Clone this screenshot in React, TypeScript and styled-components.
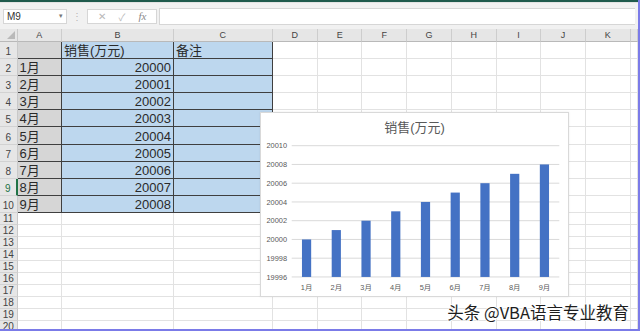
import styled, { createGlobalStyle } from "styled-components"

const GlobalStyle = createGlobalStyle`
    html, body {
        margin: 0;
        padding: 0;
        background: #ffffff;
    }
`

const COLS = ["", "A", "B", "C", "D", "E", "F", "G", "H", "I", "J", "K", ""]
const COL_WIDTHS = "17.5px 44.5px 112px 98.5px 45.3px 44.7px 44.7px 44.7px 44.7px 44.7px 44.7px 44.7px 1fr"
const MONTHS = ["1月", "2月", "3月", "4月", "5月", "6月", "7月", "8月", "9月"]
const SALES = [20000, 20001, 20002, 20003, 20004, 20005, 20006, 20007, 20008]
const ACTIVE_ROW = 9

type CellFill = "none" | "gray" | "blue"

function cellData(row: number, col: number): { text: string; fill: CellFill; boxed: boolean; right: boolean } {
    if (row > 10 || col > 3) return { text: "", fill: "none", boxed: false, right: false }
    if (col === 1) return { text: row === 1 ? "" : MONTHS[row - 2], fill: "gray", boxed: true, right: false }
    if (col === 2) {
        if (row === 1) return { text: "销售(万元)", fill: "blue", boxed: true, right: false }
        return { text: String(SALES[row - 2]), fill: "blue", boxed: true, right: true }
    }
    return { text: row === 1 ? "备注" : "", fill: "blue", boxed: true, right: false }
}

export default function App() {
    const rows = Array.from({ length: 20 }, (_, i) => i + 1)

    return (
        <Page>
            <GlobalStyle />
            <TopLine />
            <FormulaBar>
                <NameBox>
                    <span>M9</span>
                    <Caret>▾</Caret>
                </NameBox>
                <Grip>⋮</Grip>
                <FxBox>
                    <FxIcon>✕</FxIcon>
                    <FxIcon>✓</FxIcon>
                    <FxLabel>fx</FxLabel>
                </FxBox>
                <FormulaInput />
            </FormulaBar>
            <Sheet>
                {COLS.map((c, i) =>
                    i === 0 ? (
                        <Corner key="corner">
                            <CornerTriangle />
                        </Corner>
                    ) : (
                        <ColHeader key={"h" + i}>{c}</ColHeader>
                    )
                )}
                {rows.map((r) => (
                    <Row key={r}>
                        <RowHeader $active={r === ACTIVE_ROW} $small={r > 10}>
                            {r}
                        </RowHeader>
                        {COLS.slice(1).map((_, ci) => {
                            const d = cellData(r, ci + 1)
                            return (
                                <Cell key={ci} $fill={d.fill} $boxed={d.boxed} $right={d.right}>
                                    {d.text}
                                </Cell>
                            )
                        })}
                    </Row>
                ))}
            </Sheet>
            <SalesChart />
            <Watermark>头条 @VBA语言专业教育</Watermark>
        </Page>
    )
}

function SalesChart() {
    const left = 30.7
    const right = 298.3
    const top = 5.7
    const step = 18.75
    const ticks = [20010, 20008, 20006, 20004, 20002, 20000, 19998, 19996]
    const baseY = top + step * 7
    const band = (right - left) / SALES.length
    const valueY = (v: number) => baseY - ((v - 19996) / 2) * step

    return (
        <Chart>
            <ChartTitle>销售(万元)</ChartTitle>
            <svg width="307" height="156" viewBox="0 0 307 156">
                {ticks.map((t, i) => (
                    <g key={t}>
                        <line x1={left} x2={right} y1={top + i * step} y2={top + i * step} stroke="#d9d9d9" strokeWidth="1" />
                        <text x="26" y={top + i * step + 2.6} textAnchor="end" fontSize="7.4" fill="#595959" fontFamily="'Liberation Sans', sans-serif">
                            {t}
                        </text>
                    </g>
                ))}
                {SALES.map((v, i) => {
                    const cx = left + (i + 0.5) * band
                    const y = valueY(v)
                    return (
                        <g key={i}>
                            <rect x={cx - 4.6} y={y} width="9.2" height={baseY - y} fill="#4472c4" />
                            <text x={cx} y="149.5" textAnchor="middle" fontSize="7.4" fill="#595959" fontFamily="'Liberation Sans', 'Noto Sans CJK SC', sans-serif">
                                {MONTHS[i]}
                            </text>
                        </g>
                    )
                })}
            </svg>
        </Chart>
    )
}

const Page = styled.div`
    position: relative;
    width: 640px;
    height: 331px;
    overflow: hidden;
    box-sizing: border-box;
    border-right: 2px solid #7b7be8;
    border-bottom: 2px solid #7b7be8;
    font-family: "Liberation Sans", "Noto Sans CJK SC", sans-serif;
    background: #ffffff;
`

const TopLine = styled.div`
    height: 2px;
    background: #1f5a4c;
`

const FormulaBar = styled.div`
    display: flex;
    align-items: center;
    height: 27px;
    padding: 0 0 0 3px;
    box-sizing: border-box;
    background: #f1f1f1;
    border-top: 1px solid #e2e2e2;
`

const NameBox = styled.div`
    display: flex;
    align-items: center;
    justify-content: space-between;
    width: 64px;
    height: 15px;
    box-sizing: border-box;
    padding: 0 3px 0 3px;
    background: #ffffff;
    border: 1px solid #d6d6d6;
    font-size: 10px;
    color: #333333;
`

const Caret = styled.span`
    font-size: 7px;
    color: #777777;
`

const Grip = styled.span`
    width: 20px;
    text-align: center;
    font-size: 10px;
    color: #b5b5b5;
`

const FxBox = styled.div`
    display: flex;
    align-items: center;
    justify-content: space-around;
    width: 70px;
    height: 15px;
    box-sizing: border-box;
    margin-left: 0;
    padding: 0 3px;
    background: #ffffff;
    border: 1px solid #d6d6d6;
`

const FxIcon = styled.span`
    font-size: 10px;
    color: #b8b8b8;
`

const FxLabel = styled.span`
    font-family: "Liberation Serif", serif;
    font-style: italic;
    font-size: 11px;
    color: #8a8a8a;
`

const FormulaInput = styled.div`
    flex: 1;
    height: 15px;
    margin-left: 2px;
    margin-right: 3px;
    background: #ffffff;
    border: 1px solid #d6d6d6;
    border-right: none;
`

const Sheet = styled.div`
    display: grid;
    grid-template-columns: ${COL_WIDTHS};
    grid-template-rows: 13px repeat(10, 17.1px) repeat(10, 12px);
`

const Row = styled.div`
    display: contents;
`

const Corner = styled.div`
    position: relative;
    background: #e6e6e6;
    border-right: 1px solid #c9c9c9;
    border-bottom: 1px solid #b9b9b9;
`

const CornerTriangle = styled.div`
    position: absolute;
    right: 2px;
    bottom: 2px;
    width: 0;
    height: 0;
    border-left: 8px solid transparent;
    border-bottom: 8px solid #b9b9b9;
`

const ColHeader = styled.div`
    display: flex;
    align-items: center;
    justify-content: center;
    background: #e6e6e6;
    border-right: 1px solid #cdcdcd;
    border-bottom: 1px solid #b9b9b9;
    font-size: 9px;
    color: #444444;
`

const RowHeader = styled.div<{ $active: boolean; $small: boolean }>`
    display: flex;
    align-items: flex-end;
    justify-content: center;
    padding-bottom: ${({ $small }) => ($small ? "0" : "1px")};
    box-sizing: border-box;
    background: #e6e6e6;
    border-bottom: 1px solid #d2d2d2;
    border-right: ${({ $active }) => ($active ? "2px solid #217346" : "1px solid #c9c9c9")};
    font-size: 10px;
    line-height: 11px;
    color: ${({ $active }) => ($active ? "#217346" : "#444444")};
    overflow: hidden;
`

const FILLS: Record<CellFill, string> = {
    none: "#ffffff",
    gray: "#d6d6d6",
    blue: "#bdd7ee",
}

const Cell = styled.div<{ $fill: CellFill; $boxed: boolean; $right: boolean }>`
    display: flex;
    align-items: flex-end;
    justify-content: ${({ $right }) => ($right ? "flex-end" : "flex-start")};
    padding: 0 2px 0 2px;
    box-sizing: border-box;
    background: ${({ $fill }) => FILLS[$fill]};
    border-right: 1px solid ${({ $boxed }) => ($boxed ? "#3f3f3f" : "#e2e2e2")};
    border-bottom: 1px solid ${({ $boxed }) => ($boxed ? "#3f3f3f" : "#e2e2e2")};
    font-size: 13px;
    line-height: 15px;
    color: #2a2a2a;
    white-space: nowrap;
    overflow: hidden;
`

const Chart = styled.div`
    position: absolute;
    left: 260px;
    top: 112px;
    width: 309px;
    height: 185px;
    box-sizing: border-box;
    display: flex;
    flex-direction: column;
    background: #ffffff;
    border: 1px solid #d9d9d9;
    box-shadow: 0 0 2px rgba(0, 0, 0, 0.08);
`

const ChartTitle = styled.div`
    height: 27px;
    display: flex;
    align-items: center;
    justify-content: center;
    font-size: 13px;
    color: #595959;
`

const Watermark = styled.div`
    position: absolute;
    right: 9px;
    top: 302px;
    font-family: "Noto Sans CJK SC", sans-serif;
    font-size: 16.5px;
    line-height: 20px;
    color: #1e1e1e;
    white-space: nowrap;
    text-shadow: 1px 0 0 #fff, -1px 0 0 #fff, 0 1px 0 #fff, 0 -1px 0 #fff;
`
